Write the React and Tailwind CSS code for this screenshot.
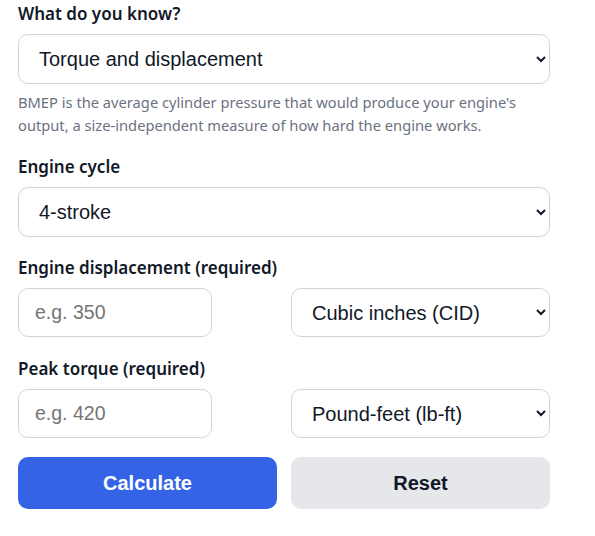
const label = 'block text-[17px] font-semibold text-[#111827] mb-[8px] leading-[24px] [font-family:"Noto_Sans",sans-serif]'
const control =
  'rounded-[10px] border border-[#d1d5db] bg-white px-4 text-[#111827] [font-family:"Liberation_Sans",Arial,sans-serif] outline-none'

export default function App() {
  return (
    <div className="w-[595px] h-[536px] bg-white px-[18px] pt-[2px]">
      <div className="w-[532px]">
        <label className={label}>What do you know?</label>
        <select className={`${control} h-[50px] w-full text-[20px]`} defaultValue="td">
          <option value="td">Torque and displacement</option>
          <option value="hp">Horsepower and displacement</option>
        </select>
        <p className="mt-[7px] text-[14.7px] leading-[23px] text-[#6b7280] [font-family:'Noto_Sans',sans-serif]">
          BMEP is the average cylinder pressure that would produce your engine's output, a size-independent measure of how hard the engine works.
        </p>

        <label className={`${label} mt-[18px]`}>Engine cycle</label>
        <select className={`${control} h-[50px] w-full text-[20px]`} defaultValue="4">
          <option value="4">4-stroke</option>
          <option value="2">2-stroke</option>
        </select>

        <label className={`${label} mt-[19px]`}>Engine displacement (required)</label>
        <div className="grid grid-cols-2 gap-[14px]">
          <input className={`${control} h-[49px] w-[194px] text-[19.5px] placeholder:text-[#757575]`} placeholder="e.g. 350" />
          <select className={`${control} h-[49px] w-full text-[20px]`} defaultValue="cid">
            <option value="cid">Cubic inches (CID)</option>
            <option value="l">Liters (L)</option>
          </select>
        </div>

        <label className={`${label} mt-[20px]`}>Peak torque (required)</label>
        <div className="grid grid-cols-2 gap-[14px]">
          <input className={`${control} h-[49px] w-[194px] text-[19.5px] placeholder:text-[#757575]`} placeholder="e.g. 420" />
          <select className={`${control} h-[49px] w-full text-[20px]`} defaultValue="lbft">
            <option value="lbft">Pound-feet (lb-ft)</option>
            <option value="nm">Newton-meters (N·m)</option>
          </select>
        </div>

        <div className="grid grid-cols-2 gap-[14px] mt-[19px]">
          <button className="h-[52px] rounded-[10px] bg-[#3563e6] text-white text-[20px] font-bold [font-family:'Liberation_Sans',Arial,sans-serif]">
            Calculate
          </button>
          <button className="h-[52px] rounded-[10px] bg-[#e5e7eb] text-[#111827] text-[20px] font-bold [font-family:'Liberation_Sans',Arial,sans-serif]">
            Reset
          </button>
        </div>
      </div>
    </div>
  )
}
